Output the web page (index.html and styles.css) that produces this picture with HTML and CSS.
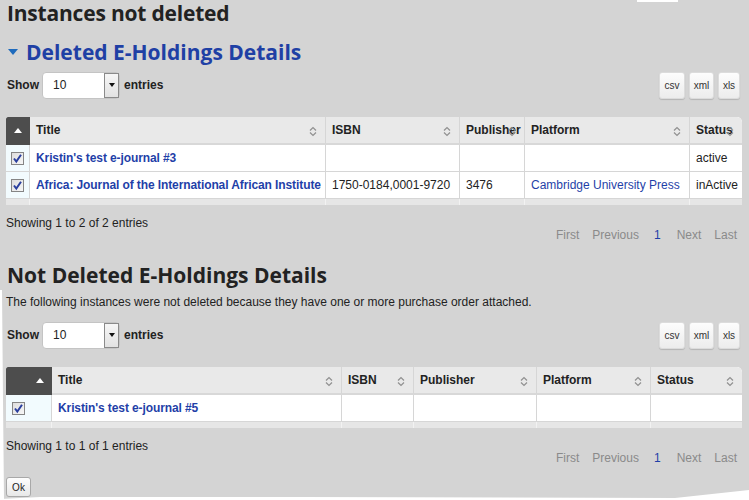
FILE: index.html
```html
<!DOCTYPE html>
<html>
<head>
<meta charset="utf-8">
<link rel="stylesheet" href="styles.css">
</head>
<body>
<div class="page">
  <h1 class="title">Instances not deleted</h1>

  <h2 class="section blue"><span class="caret"></span>Deleted E-Holdings Details</h2>

  <div class="toolbar">
    <div class="length">Show
      <span class="select"><span class="val">10</span><span class="drop"><span class="arrow"></span></span></span>
      entries</div>
    <div class="exports">
      <span class="btn">csv</span><span class="btn">xml</span><span class="btn">xls</span>
    </div>
  </div>

  <table class="grid t1">
    <colgroup><col style="width:24px"><col style="width:296px"><col style="width:134px"><col style="width:65px"><col style="width:165px"><col style="width:52px"></colgroup>
    <thead>
      <tr>
        <th class="selcol"><span class="up"></span></th>
        <th>Title<span class="sort"></span></th>
        <th>ISBN<span class="sort"></span></th>
        <th>Publisher<span class="sort"></span></th>
        <th>Platform<span class="sort"></span></th>
        <th>Status<span class="sort"></span></th>
      </tr>
    </thead>
    <tbody>
      <tr>
        <td class="chk"><span class="cb"></span></td>
        <td><a class="title-link">Kristin's test e-journal #3</a></td>
        <td></td><td></td><td></td><td>active</td>
      </tr>
      <tr>
        <td class="chk"><span class="cb"></span></td>
        <td><a class="title-link">Africa: Journal of the International African Institute</a></td>
        <td>1750-0184,0001-9720</td><td>3476</td><td><a class="plain-link">Cambridge University Press</a></td><td>inActive</td>
      </tr>
      <tr class="foot"><td></td><td></td><td></td><td></td><td></td><td></td></tr>
    </tbody>
  </table>

  <div class="info">Showing 1 to 2 of 2 entries</div>
  <div class="pager"><span>First</span><span>Previous</span><span class="cur">1</span><span>Next</span><span>Last</span></div>

  <h2 class="section dark">Not Deleted E-Holdings Details</h2>
  <p class="note">The following instances were not deleted because they have one or more purchase order attached.</p>

  <div class="toolbar t2bar">
    <div class="length">Show
      <span class="select"><span class="val">10</span><span class="drop"><span class="arrow"></span></span></span>
      entries</div>
    <div class="exports">
      <span class="btn">csv</span><span class="btn">xml</span><span class="btn">xls</span>
    </div>
  </div>

  <table class="grid t2">
    <colgroup><col style="width:46px"><col style="width:290px"><col style="width:72px"><col style="width:123px"><col style="width:114px"><col style="width:91px"></colgroup>
    <thead>
      <tr>
        <th class="selcol right"><span class="up"></span></th>
        <th>Title<span class="sort"></span></th>
        <th>ISBN<span class="sort"></span></th>
        <th>Publisher<span class="sort"></span></th>
        <th>Platform<span class="sort"></span></th>
        <th>Status<span class="sort"></span></th>
      </tr>
    </thead>
    <tbody>
      <tr>
        <td class="chk"><span class="cb"></span></td>
        <td><a class="title-link">Kristin's test e-journal #5</a></td>
        <td></td><td></td><td></td><td></td>
      </tr>
      <tr class="foot"><td></td><td></td><td></td><td></td><td></td><td></td></tr>
    </tbody>
  </table>

  <div class="info">Showing 1 to 1 of 1 entries</div>
  <div class="pager"><span>First</span><span>Previous</span><span class="cur">1</span><span>Next</span><span>Last</span></div>

  <button class="ok">Ok</button>
</div>

<svg class="tear" width="749" height="500" viewBox="0 0 749 500">
  <rect x="637" y="0" width="41" height="2" fill="#fff"/>
  <polygon points="0,290 2,290 3,400 4,500 0,500" fill="#fff"/>
  <polygon points="0,499 40,497 300,497 675,498 749,490 749,500 0,500" fill="#fff"/>
</svg>
</body>
</html>
```

FILE: styles.css
```css
html, body {
  margin: 0;
  padding: 0;
  background: #d4d4d4;
}
body {
  font-family: "Liberation Sans", Arial, sans-serif;
  font-size: 12px;
  color: #333;
  width: 749px;
  height: 500px;
  overflow: hidden;
  position: relative;
}
.page {
  padding: 0 7px 0 6px;
}
.title {
  margin: 0;
  font-family: "Open Sans", "Lato", sans-serif;
  font-weight: 700;
  font-size: 21px;
  line-height: 26px;
  color: #222;
  padding-left: 1px;
  letter-spacing: -0.2px;
}
.section {
  margin: 0;
  font-family: "Open Sans", "Lato", sans-serif;
  font-weight: 700;
  font-size: 21px;
  line-height: 26px;
  display: flex;
  align-items: center;
  padding-left: 1px;
}
.section.blue {
  margin-top: 13px;
  color: #1f40a5;
}
.section.dark {
  margin-top: 19px;
  color: #222;
}
.caret {
  width: 0;
  height: 0;
  border-left: 5px solid transparent;
  border-right: 5px solid transparent;
  border-top: 6px solid #1f6bbd;
  margin: 0 8px 0 1px;
}
.toolbar {
  display: flex;
  justify-content: space-between;
  align-items: center;
  margin-top: 6px;
  height: 28px;
}
.t2bar {
  margin-top: 12px;
}
.length {
  display: flex;
  align-items: center;
  font-weight: bold;
  color: #222;
  gap: 4px;
  padding-left: 1px;
}
.select {
  display: inline-flex;
  align-items: center;
  justify-content: space-between;
  width: 76px;
  height: 25px;
  margin-left: -1px;
  background: #fff;
  border: 1px solid #c4c4c4;
  border-radius: 4px;
  font-weight: normal;
  color: #222;
}
.select .val {
  padding-left: 10px;
}
.drop {
  width: 15px;
  height: 25px;
  border: 1px solid #8a8a8a;
  background: linear-gradient(#f6f6f6, #e2e2e2);
  display: flex;
  align-items: center;
  justify-content: center;
  box-sizing: border-box;
}
.arrow {
  width: 0;
  height: 0;
  border-left: 3.5px solid transparent;
  border-right: 3.5px solid transparent;
  border-top: 4px solid #111;
}
.exports {
  display: flex;
  gap: 4px;
  margin-right: 2px;
}
.btn {
  display: inline-flex;
  align-items: center;
  justify-content: center;
  height: 27px;
  padding: 0 5px;
  box-sizing: border-box;
  font-size: 10px;
  color: #333;
  background: linear-gradient(#fdfdfd, #ececec);
  border: 1px solid #dcdcdc;
  border-radius: 3px;
  box-shadow: 0 1px 1px rgba(0,0,0,0.15);
}
.btn:nth-child(1) { width: 26px; }
.btn:nth-child(2) { width: 25px; }
.btn:nth-child(3) { width: 22px; }

.grid {
  margin-top: 18px;
  width: 736px;
  table-layout: fixed;
  border-collapse: separate;
  border-spacing: 0;
  background: #fff;
  border-top-right-radius: 5px;
  overflow: hidden;
}
.grid th {
  height: 26px;
  background: #e9e9e9;
  text-align: left;
  font-weight: bold;
  color: #222;
  padding: 0 6px;
  position: relative;
  white-space: nowrap;
  border-right: 1px solid #d6d6d6;
  border-bottom: 2px solid #d8d8d8;
}
.grid th:last-child {
  border-right: 0;
  border-top-right-radius: 5px;
}
.grid th.selcol {
  background: #4d4d4d;
  border-right: 0;
  border-bottom-color: #4d4d4d;
  text-align: center;
  padding: 0;
  border-top-left-radius: 2px;
}
.grid th.selcol.right {
  text-align: right;
  padding-right: 8px;
}
.up {
  display: inline-block;
  width: 0;
  height: 0;
  border-left: 4px solid transparent;
  border-right: 4px solid transparent;
  border-bottom: 5px solid #fff;
  vertical-align: middle;
}
.sort {
  position: absolute;
  right: 8px;
  top: 9px;
  width: 8px;
  height: 11px;
  background: url("data:image/svg+xml;utf8,<svg xmlns='http://www.w3.org/2000/svg' width='8' height='11' viewBox='0 0 8 11'><path d='M1 4.5 L4 1.5 L7 4.5 M1 6.5 L4 9.5 L7 6.5' stroke='%23909090' stroke-width='1.2' fill='none'/></svg>") no-repeat;
}
.grid td {
  height: 26px;
  padding: 0 6px;
  white-space: nowrap;
  overflow: hidden;
  border-right: 1px solid #d6d6d6;
  border-bottom: 1px solid #d6d6d6;
  color: #222;
}
.grid td:last-child {
  border-right: 0;
}
.grid td.chk {
  background: #f2fbfe;
  padding: 0;
  text-align: center;
}
.t2 td.chk {
  text-align: left;
  padding-left: 6px;
}
.grid tr.foot td {
  height: 6px;
  background: #e6e6e6;
  border-bottom: 0;
  border-right-color: #f2f2f2;
  padding: 0;
}
.cb {
  display: inline-block;
  width: 13px;
  height: 13px;
  vertical-align: middle;
  background: url("data:image/svg+xml;utf8,<svg xmlns='http://www.w3.org/2000/svg' width='13' height='13' viewBox='0 0 13 13'><defs><linearGradient id='g' x1='0' y1='0' x2='1' y2='1'><stop offset='0' stop-color='%23dcdcdc'/><stop offset='1' stop-color='%23f8f8f8'/></linearGradient></defs><rect x='0.5' y='0.5' width='12' height='12' fill='url(%23g)' stroke='%23858585'/><path d='M3 6.5 L5.3 9.5 L10 2.8' stroke='%232a3f9e' stroke-width='2' fill='none'/></svg>") no-repeat;
}
.title-link {
  color: #1f3fa8;
  font-weight: bold;
  letter-spacing: -0.1px;
}
.plain-link {
  color: #1f3fa8;
}
.info {
  margin-top: 10px;
  line-height: 16px;
  color: #222;
}
.pager {
  display: flex;
  justify-content: flex-end;
  line-height: 16px;
  margin-top: -4px;
  margin-right: 5px;
  color: #8a8a8a;
}
.pager span {
  margin-left: 13px;
}
.pager .cur {
  color: #1f3fa8;
  margin-left: 15px;
  margin-right: 3px;
}
.note {
  margin: 7px 0 0 0;
  line-height: 14px;
  color: #222;
}
.ok {
  display: block;
  margin-top: 11px;
  height: 20px;
  width: 25px;
  padding: 0;
  font-family: "Liberation Sans", Arial, sans-serif;
  font-size: 10px;
  color: #222;
  background: linear-gradient(#fdfdfd, #e8e8e8);
  border: 1px solid #a8a8a8;
  border-radius: 3px;
}
.tear {
  position: absolute;
  left: 0;
  top: 0;
  pointer-events: none;
}
```
